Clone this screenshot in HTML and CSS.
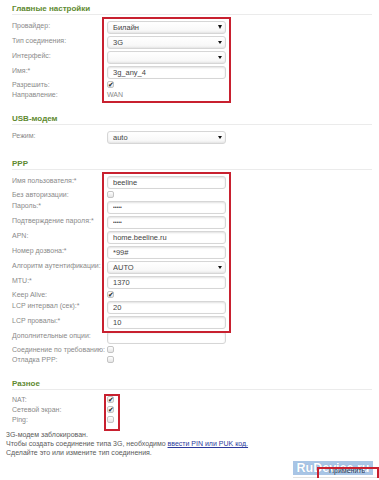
FILE: index.html
```html
<!DOCTYPE html>
<html lang="ru">
<head>
  <meta charset="UTF-8">
  <title>3G соединение</title>
  <link rel="stylesheet" href="styles.css">
</head>
<body>
  <div class="page">

    <div class="section">
      <h2 class="section-title">Главные настройки</h2>
      <div class="rows marked">
        <div class="row"><label>Провайдер:</label><span class="select big"><select><option>Билайн</option></select></span></div>
        <div class="row"><label>Тип соединения:</label><span class="select"><select><option>3G</option></select></span></div>
        <div class="row"><label>Интерфейс:</label><span class="select"><select><option></option></select></span></div>
        <div class="row"><label>Имя:*</label><input class="field" type="text" value="3g_any_4"></div>
        <div class="row check-row"><label>Разрешить:</label><span class="check on"></span></div>
        <div class="row check-row"><label>Направление:</label><span class="plain">WAN</span></div>
      </div>
    </div>

    <div class="section">
      <h2 class="section-title">USB-модем</h2>
      <div class="rows">
        <div class="row"><label>Режим:</label><span class="select"><select><option>auto</option></select></span></div>
      </div>
    </div>

    <div class="section">
      <h2 class="section-title">PPP</h2>
      <div class="rows">
        <div class="rows-group marked">
          <div class="row"><label>Имя пользователя:*</label><input class="field" type="text" value="beeline"></div>
          <div class="row check-row"><label>Без авторизации:</label><span class="check"></span></div>
          <div class="row"><label>Пароль:*</label><input class="field dots" type="text" value="•••••"></div>
          <div class="row"><label>Подтверждение пароля:*</label><input class="field dots" type="text" value="•••••"></div>
          <div class="row"><label>APN:</label><input class="field" type="text" value="home.beeline.ru"></div>
          <div class="row"><label>Номер дозвона:*</label><input class="field" type="text" value="*99#"></div>
          <div class="row"><label>Алгоритм аутентификации:</label><span class="select"><select><option>AUTO</option></select></span></div>
          <div class="row"><label>MTU:*</label><input class="field" type="text" value="1370"></div>
          <div class="row check-row"><label>Keep Alive:</label><span class="check on"></span></div>
          <div class="row"><label>LCP интервал (сек):*</label><input class="field" type="text" value="20"></div>
          <div class="row"><label>LCP провалы:*</label><input class="field" type="text" value="10"></div>
        </div>
        <div class="row"><label>Дополнительные опции:</label><input class="field" type="text" value=""></div>
        <div class="row check-row"><label>Соединение по требованию:</label><span class="check"></span></div>
        <div class="row check-row"><label>Отладка PPP:</label><span class="check"></span></div>
      </div>
    </div>

    <div class="section">
      <h2 class="section-title">Разное</h2>
      <div class="rows marked narrow">
        <div class="row check-row"><label>NAT:</label><span class="check on"></span></div>
        <div class="row check-row"><label>Сетевой экран:</label><span class="check on"></span></div>
        <div class="row check-row"><label>Ping:</label><span class="check"></span></div>
      </div>
    </div>

    <div class="notice">
      3G-модем заблокирован.<br>
      Чтобы создать соединение типа 3G, необходимо <a href="#">ввести PIN или PUK код.</a><br>
      Сделайте это или измените тип соединения.
    </div>

    <div class="actions">
      <button class="apply">
        <span class="watermark">RuDevice.ru</span>
        <span class="apply-label">Применить</span>
      </button>
    </div>

  </div>
</body>
</html>
```

FILE: styles.css
```css
body {
  margin: 0;
  background: #fff;
  font-family: 'Liberation Sans', Arial, sans-serif;
  font-size: 7px;
  color: #8a8a8a;
}

.page {
  padding: 4px 7px 0 12px;
}

.section + .section {
  margin-top: 15px;
}

.section-title {
  margin: 0;
  font-size: 8px;
  line-height: 10px;
  font-weight: bold;
  color: #5e8a30;
  border-bottom: 1px solid #ebebeb;
}

.rows {
  margin-top: 6px;
  display: flex;
  flex-direction: column;
  gap: 2px;
}

.rows-group {
  display: flex;
  flex-direction: column;
  gap: 2px;
}

.row {
  display: flex;
  height: 13px;
}

.row label {
  width: 95px;
  flex-shrink: 0;
  line-height: 9px;
  white-space: nowrap;
}

.check-row {
  height: 8px;
}

.check-row label {
  line-height: 8px;
}

/* text fields */
.field {
  box-sizing: border-box;
  width: 119px;
  height: 13px;
  margin: 0;
  padding: 0 0 1px 5px;
  border: 1px solid #d6d6d6;
  border-radius: 3px;
  box-shadow: inset 0 1px 2px rgba(0, 0, 0, 0.12);
  background: #fff;
  font-family: 'Liberation Sans', Arial, sans-serif;
  font-size: 7.5px;
  color: #444;
  outline: none;
}

.field.dots {
  font-size: 5px;
  letter-spacing: 0;
}

.select {
  position: relative;
  display: block;
  width: 119px;
  height: 13px;
}

.select select {
  appearance: none;
  box-sizing: border-box;
  width: 100%;
  height: 100%;
  margin: 0;
  padding: 0 0 0 5px;
  border: 1px solid #d6d6d6;
  border-radius: 3px;
  box-shadow: inset 0 -1px 2px rgba(0, 0, 0, 0.08);
  background: linear-gradient(#fff, #f6f6f6);
  font-family: 'Liberation Sans', Arial, sans-serif;
  font-size: 7.5px;
  color: #444;
}

.select::after {
  content: "";
  position: absolute;
  right: 4px;
  top: 5px;
  border-left: 2px solid transparent;
  border-right: 2px solid transparent;
  border-top: 3px solid #111;
}

.select.big::after {
  border-left-width: 2.5px;
  border-right-width: 2.5px;
  border-top-width: 4px;
  top: 4px;
}

.check {
  box-sizing: border-box;
  width: 7px;
  height: 7px;
  border: 1px solid #c4c4c4;
  border-radius: 2px;
  background: linear-gradient(#fff, #e4e4e4);
  color: #222;
  font-size: 7px;
  line-height: 5px;
  text-align: center;
  overflow: visible;
}

.check.on::before {
  content: "✔";
}

.plain {
  line-height: 8px;
  color: #8a8a8a;
}

/* red annotation frames */
.marked {
  position: relative;
}

.marked::after {
  content: "";
  position: absolute;
  left: 90px;
  width: 125px;
  top: -4px;
  bottom: -4px;
  border: 2px solid #c8202f;
}

.marked.narrow::after {
  left: 92px;
  width: 12px;
  top: -2px;
  bottom: -7px;
}

.notice {
  margin: 6px 0 0 -6px;
  line-height: 9px;
  color: #5a5a5a;
}

.notice a {
  color: #2c3a9c;
}

.actions {
  display: flex;
  justify-content: flex-end;
  margin-right: -7px;
}

.apply {
  position: relative;
  width: 86px;
  height: 21px;
  margin: 0;
  padding: 0;
  border: none;
  border-bottom: 1px solid #e2e2e2;
  background: #fff;
  font-family: 'Liberation Sans', Arial, sans-serif;
  text-align: left;
  cursor: pointer;
}

.watermark {
  display: block;
  width: 80px;
  height: 14px;
  margin-top: 1px;
  background: #a9c5e5;
  font-size: 12.5px;
  font-weight: bold;
  line-height: 15px;
  text-align: center;
  color: #fff;
  text-shadow: 0 0 1px #7fa3cc;
  white-space: nowrap;
  overflow: hidden;
}

.apply-label {
  position: absolute;
  left: 36px;
  top: 10px;
  font-size: 7px;
  color: #2e3d58;
}

.apply::after {
  content: "";
  position: absolute;
  left: 24px;
  right: 0;
  top: 10px;
  bottom: -4px;
  border: 2px solid #c8202f;
}
```
